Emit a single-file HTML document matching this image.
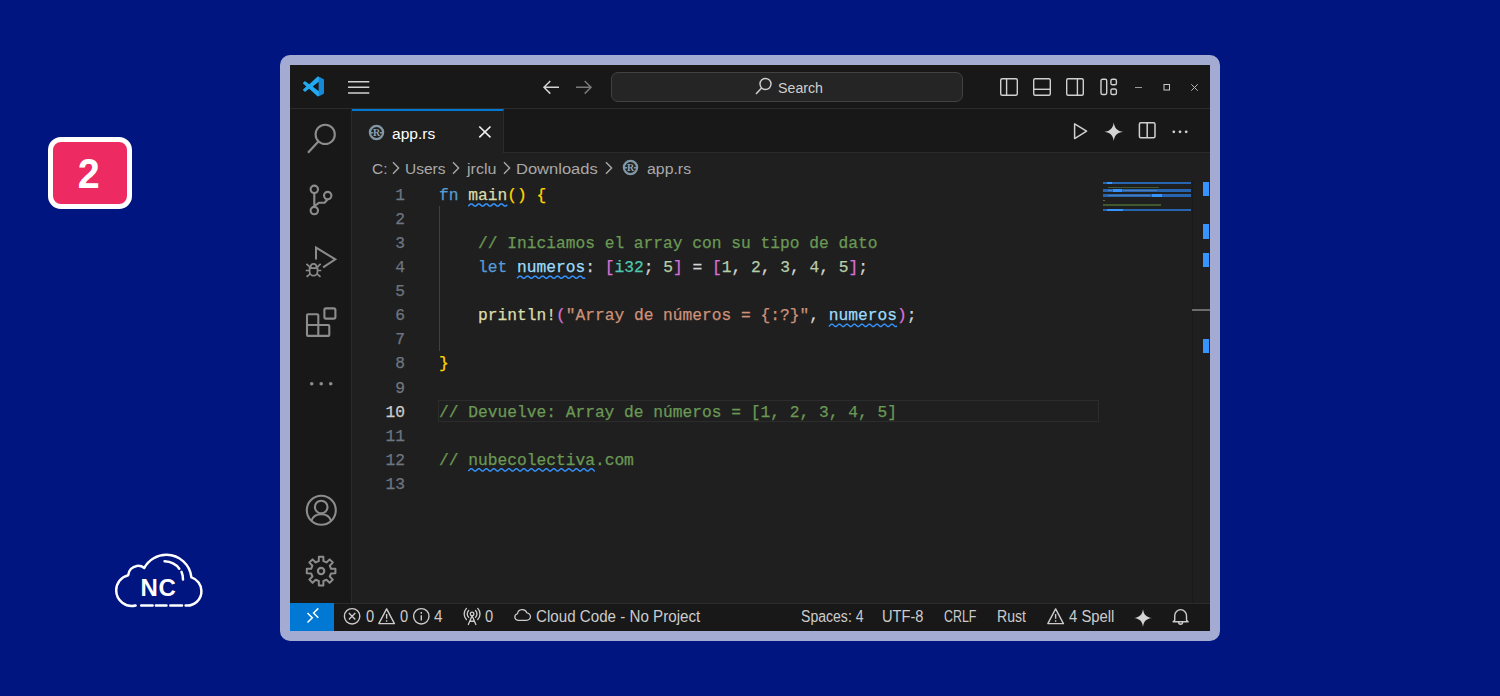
<!DOCTYPE html>
<html lang="es">
<head>
<meta charset="utf-8">
<title>app.rs</title>
<style>
*{box-sizing:border-box;margin:0;padding:0}
html,body{width:1500px;height:696px;overflow:hidden}
body{background:#00157f;position:relative;font-family:"Liberation Sans",sans-serif}
.abs{position:absolute}
#badge{left:48px;top:137px;width:84px;height:72px;border:5px solid #fff;border-radius:13px;background:#ee2a62;color:#fff;font-weight:bold;font-size:42.5px;line-height:63.500px;text-align:center;text-indent:-1px}
#frame{left:280px;top:55px;width:940px;height:586px;background:#a4abd3;border-radius:10px}
#win{left:290px;top:65px;width:920px;height:566px;background:#1f1f1f;overflow:hidden}
#title{left:0;top:0;width:920px;height:44px;background:#181818;border-bottom:1px solid #2b2b2b}
#act{left:0;top:44px;width:62px;height:494px;background:#181818;border-right:1px solid #2b2b2b}
#tabs{left:62px;top:44px;width:858px;height:44px;background:#181818;border-bottom:1px solid #2b2b2b}
#tab{left:0;top:0;width:152px;height:44px;background:#1f1f1f;border-top:2px solid #0078d4;border-right:1px solid #2b2b2b}
#status{left:0;top:538px;width:920px;height:28px;background:#181818;border-top:1px solid #2b2b2b}
#remote{left:0;top:-1px;width:44px;height:28px;background:#0078d4}
.st{top:3.4px}
.ui{color:#cccccc;font-size:15.5px;white-space:nowrap;line-height:20px}
.ui span,.ui.abs{transform-origin:0 50%}
.st{font-size:15.8px}
.code{-webkit-text-stroke:0.25px;font-family:"Liberation Mono",monospace;font-size:16.24px;line-height:24.08px;white-space:pre;color:#d4d4d4}
.ln{left:62px;width:53px;text-align:right;color:#6e7681}
.ln.cur{color:#cccccc}
.c{color:#6a9955}.k{color:#569cd6}.f{color:#dcdcaa}.y{color:#ffd700}.p{color:#da70d6}.v{color:#9cdcfe}.t{color:#4ec9b0}.n{color:#b5cea8}.s{color:#ce9178}
.sq{}
</style>
</head>
<body>
<div id="badge" class="abs"><span style="display:inline-block;transform:scaleX(0.93)">2</span></div>

<svg class="abs" style="left:105px;top:545px" width="110" height="70" viewBox="0 0 110 70">
 <g fill="none" stroke="#fff" stroke-width="2.5" stroke-linecap="round" stroke-linejoin="round">
  <path d="M30.6 60.5 A15.6 15.6 0 0 1 11.2 45.6 A15.6 15.6 0 0 1 23.2 30.2 A10 10 0 0 1 31.8 20.9 A10 10 0 0 1 39.3 22.9 A25.15 25.15 0 0 1 61.7 9.8 A25.15 25.15 0 0 1 86.4 32.4 A14.2 14.2 0 0 1 96.400 45.800 A14.2 14.2 0 0 1 80.600 60.500"/>
  <path d="M36.2 60.5H47.6 M50.9 60.5H61.5 M65.3 60.5H77"/>
  <path d="M59.6 16.3 C65.5 16.6 71 19.3 74.3 23.7"/>
  <path d="M76.5 26.8 C77.6 29.3 78 32 78 34.6"/>
 </g>
 <text x="53.4" y="51.3" font-family="Liberation Sans,sans-serif" font-weight="bold" font-size="24" fill="#fff" text-anchor="middle" letter-spacing="0.6">NC</text>
</svg>

<div id="frame" class="abs"></div>
<div id="win" class="abs">
 <div id="title" class="abs">
  <svg class="abs" style="left:12.600px;top:10.800px" width="21" height="21" viewBox="0 0 100 100">
   <path fill="#23a9f2" d="M74.9 3.5 96 13.7c2.400000 1.200000 4 3.600000 4 6.300000v60c0 2.700000-1.600000 5.100000-4 6.300000L74.900000 96.500000c-2.500000 1.200000-5.500000.700000-7.500000-1.300000L29.500000 60.500000 12 73.800000c-1.600000 1.200000-3.800000 1.100000-5.300000-.200000L1.500000 68.900000c-1.900000-1.700000-1.900000-4.600000 0-6.300000L16 50 1.500000 37.400000c-1.900000-1.700000-1.900000-4.600000 0-6.300000l5.200000-4.700000c1.500000-1.300000 3.700000-1.400000 5.300000-.200000l17.500000 13.300000L67.400000 4.800000c2-2 5-2.500000 7.500000-1.300000zM75 27.300000 46.200000 50 75 72.700000z"/>
   <path fill="#0b6fbf" d="M75 3.600000 96 13.700000c2.400000 1.200000 4 3.600000 4 6.300000v60c0 2.700000-1.600000 5.100000-4 6.300000L75 96.400000z" opacity=".55"/>
  </svg>
  <svg class="abs" style="left:58px;top:15px" width="22" height="14" viewBox="0 0 22 14"><path d="M0 1.700H21.300M0 7.300H21.300M0 13H21.300" stroke="#d0d0d0" stroke-width="1.500" fill="none"/></svg>
  <svg class="abs" style="left:252px;top:14px" width="20" height="16" viewBox="0 0 20 16"><path d="M17 8.300H2M8.300 2 2 8.300l6.300 6.300" stroke="#d4d4d4" stroke-width="1.500" fill="none" stroke-linejoin="miter"/></svg>
  <svg class="abs" style="left:284px;top:14px" width="20" height="16" viewBox="0 0 20 16"><path d="M2 8.300H17M10.700 2 17 8.300l-6.300 6.300" stroke="#7a7a7a" stroke-width="1.500" fill="none"/></svg>
  <div class="abs" style="left:321px;top:6.500px;width:352px;height:30.500px;border:1px solid #424242;border-radius:7px;background:#252525"></div>
  <svg class="abs" style="left:463.900px;top:11.200px" width="20" height="20" viewBox="0 0 20 20"><circle cx="11.500" cy="8" r="5.500" stroke="#cfcfcf" stroke-width="1.400" fill="none"/><path d="M7.800 11.800 2 18" stroke="#cfcfcf" stroke-width="1.500"/></svg>
  <div class="abs ui" id="t_search" style="left:488.48px;top:12.6px;color:#cfcfcf;transform:scaleX(0.9167)">Search</div>
  <svg class="abs" style="left:709px;top:12px" width="20" height="20" viewBox="0 0 20 20"><rect x="1.700" y="1.700" width="16.600" height="16.600" rx="1.500" stroke="#d0d0d0" stroke-width="1.400" fill="none"/><path d="M7.600 1.700v16.600" stroke="#d0d0d0" stroke-width="1.400"/></svg>
  <svg class="abs" style="left:742px;top:12px" width="20" height="20" viewBox="0 0 20 20"><rect x="1.700" y="1.700" width="16.600" height="16.600" rx="1.500" stroke="#d0d0d0" stroke-width="1.400" fill="none"/><path d="M1.700 12.300h16.600" stroke="#d0d0d0" stroke-width="1.400"/></svg>
  <svg class="abs" style="left:775px;top:12px" width="20" height="20" viewBox="0 0 20 20"><rect x="1.700" y="1.700" width="16.600" height="16.600" rx="1.500" stroke="#d0d0d0" stroke-width="1.400" fill="none"/><path d="M12.400 1.700v16.600" stroke="#d0d0d0" stroke-width="1.400"/></svg>
  <svg class="abs" style="left:809px;top:12px" width="20" height="20" viewBox="0 0 20 20"><rect x="2" y="2.300" width="5.700" height="15.200" rx="1.400" stroke="#d0d0d0" stroke-width="1.400" fill="none"/><rect x="11.900" y="2.300" width="5.500" height="5.500" rx="1.600" stroke="#d0d0d0" stroke-width="1.400" fill="none"/><rect x="11.900" y="12" width="5.500" height="5.500" rx="1.600" stroke="#d0d0d0" stroke-width="1.400" fill="none"/></svg>
  <svg class="abs" style="left:843px;top:17px" width="12" height="12" viewBox="0 0 12 12"><path d="M2 5.500h7" stroke="#9a9a9a" stroke-width="1"/></svg>
  <svg class="abs" style="left:872px;top:18px" width="10" height="10" viewBox="0 0 10 10"><rect x="2" y="1.500" width="5.500" height="5.500" stroke="#c8c8c8" stroke-width="1" fill="none"/></svg>
  <svg class="abs" style="left:899px;top:17px" width="12" height="12" viewBox="0 0 12 12"><path d="M2.300 2.300 8.700 8.700M8.700 2.300 2.300 8.700" stroke="#b8b8b8" stroke-width="1"/></svg>
 </div>
 <div id="act" class="abs">
  <svg class="abs" style="left:0;top:0" width="61" height="494" viewBox="290 109 61 494" fill="none" stroke="#8c8c8c" stroke-width="2.100">
   <circle cx="325.200" cy="134.400" r="9.600"/><path d="M318.600 141.200 308 152.800" stroke-width="2.200"/>
   <circle cx="314.300" cy="189.300" r="3.700"/><circle cx="314.300" cy="210.600" r="3.700"/><circle cx="327.700" cy="195.600" r="3.700"/>
   <path d="M314.300 193V206.900M327.700 199.300 324.600 202.700H319.200L314.600 206" stroke-linejoin="round"/>
   <path d="M316 259.500V247.600L335.300 259.300 323.100 267.300" stroke-linejoin="miter" stroke-width="2"/>
   <g stroke-width="1.700"><path d="M309.600 268.200h7.900v3.200a3.950 4.300 0 0 1-7.900 0zM310.500 268c0-5.600 6.100-5.600 6.100 0"/>
   <path d="M309.600 270.500h-3.800M317.500 270.500h3.800M310 267.200l-3.600-3.300M317.100 267.200l3.600-3.300M310.300 273.600l-3.700 3.300M316.800 273.600l3.700 3.300"/></g>
   <path d="M308 314.200H317.300a1 1 0 0 1 1 1V325H328.300a1 1 0 0 1 1 1V334.900a1 1 0 0 1-1 1H308a1 1 0 0 1-1-1V315.200a1 1 0 0 1 1-1ZM307 325H318.300V335.900"/>
   <rect x="324.400" y="308.400" width="11" height="10.200" rx="1.600"/>
   <g fill="#8c8c8c" stroke="none"><circle cx="311.700" cy="383.700" r="1.800"/><circle cx="321.200" cy="383.700" r="1.800"/><circle cx="330.700" cy="383.700" r="1.800"/></g>
   <circle cx="321.300" cy="510.300" r="14.500"/><circle cx="321.200" cy="507" r="6.300"/>
   <path d="M311.300 520.800c1.500-4.400 5.300-6.600 9.900-6.600s8.400 2.200 9.900 6.600"/>
   <path d="M323.40 581.04 L323.37 585.42 L318.83 585.42 L318.80 581.04 L315.70 579.75 L312.58 582.83 L309.37 579.62 L312.45 576.50 L311.16 573.40 L306.78 573.37 L306.78 568.83 L311.16 568.80 L312.45 565.70 L309.37 562.58 L312.58 559.37 L315.70 562.45 L318.80 561.16 L318.83 556.78 L323.37 556.78 L323.40 561.16 L326.50 562.45 L329.62 559.37 L332.83 562.58 L329.75 565.70 L331.04 568.80 L335.42 568.83 L335.42 573.37 L331.04 573.40 L329.75 576.50 L332.83 579.62 L329.62 582.83 L326.50 579.75Z" stroke-linejoin="round" stroke-width="2"/><circle cx="321.100" cy="571.100" r="3.200"/>
  </svg>
 </div>
 <div id="tabs" class="abs">
  <div id="tab" class="abs">
   <svg class="abs" style="left:16px;top:13px" width="17" height="17" viewBox="0 0 17 17"><circle cx="8.500" cy="8.500" r="6.600" fill="none" stroke="#8197a5" stroke-width="2.300"/><path d="M3 8.700H5.200M11.800 8.700H14" stroke="#8197a5" stroke-width="1.400"/><text x="8.600" y="12" font-family="Liberation Serif,serif" font-weight="bold" font-size="10" fill="#8ea4b2" text-anchor="middle">R</text></svg>
   <div class="abs ui" id="t_tab" style="left:39.90px;top:12.5px;color:#ffffff;transform:scaleX(1.0048)">app.rs</div>
   <svg class="abs" style="left:125px;top:12.800px" width="16" height="16" viewBox="0 0 16 16"><path d="M2.300 2.500 13.500 13.300M13.500 2.500 2.300 13.300" stroke="#f0f0f0" stroke-width="1.650"/></svg>
  </div>
  <svg class="abs" style="left:718px;top:12px" width="20" height="20" viewBox="0 0 20 20"><path d="M4.600 2.800V17.600L16.600 10.200Z" fill="none" stroke="#d0d0d0" stroke-width="1.500" stroke-linejoin="round"/></svg>
  <svg class="abs" style="left:750.500px;top:11.500px" width="21.500" height="21.500" viewBox="0 0 20 20"><path d="M10 1.300C10.700 6.700 13.300 9.300 18.700 10 13.300 10.700 10.700 13.300 10 18.700 9.300 13.300 6.700 10.700 1.300 10 6.700 9.300 9.300 6.700 10 1.300Z" fill="#d4d4d4"/></svg>
  <svg class="abs" style="left:785px;top:12px" width="20" height="20" viewBox="0 0 20 20"><rect x="2.400" y="1.800" width="15.600" height="15" rx="1.500" stroke="#d0d0d0" stroke-width="1.500" fill="none"/><path d="M10.200 1.800v15" stroke="#d0d0d0" stroke-width="1.500"/></svg>
  <svg class="abs" style="left:818px;top:12px" width="20" height="20" viewBox="0 0 20 20" fill="#d0d0d0"><circle cx="3.800" cy="10.800" r="1.400"/><circle cx="10" cy="10.800" r="1.400"/><circle cx="16.200" cy="10.800" r="1.400"/></svg>
 </div>
 <div id="crumbs" class="abs ui" style="left:62px;top:88px;width:760px;height:28px;color:#a9a9a9">
  <span class="abs" id="b1" style="left:20.10px;top:5.6px;transform:scaleX(0.9946)">C:</span>
  <svg class="abs" style="left:39.0px;top:7.600px" width="10" height="14" viewBox="0 0 10 14"><path d="M2 1.300 7.600 7 2 12.700" fill="none" stroke="#a9a9a9" stroke-width="1.400"/></svg>
  <span class="abs" id="b2" style="left:53.00px;top:5.6px;transform:scaleX(1.0000)">Users</span>
  <svg class="abs" style="left:99.4px;top:7.600px" width="10" height="14" viewBox="0 0 10 14"><path d="M2 1.300 7.600 7 2 12.700" fill="none" stroke="#a9a9a9" stroke-width="1.400"/></svg>
  <span class="abs" id="b3" style="left:115.03px;top:5.6px;transform:scaleX(1.0345)">jrclu</span>
  <svg class="abs" style="left:150.0px;top:7.600px" width="10" height="14" viewBox="0 0 10 14"><path d="M2 1.300 7.600 7 2 12.700" fill="none" stroke="#a9a9a9" stroke-width="1.400"/></svg>
  <span class="abs" id="b4" style="left:163.83px;top:5.6px;transform:scaleX(1.0658)">Downloads</span>
  <svg class="abs" style="left:251.7px;top:7.600px" width="10" height="14" viewBox="0 0 10 14"><path d="M2 1.300 7.600 7 2 12.700" fill="none" stroke="#a9a9a9" stroke-width="1.400"/></svg>
  <svg class="abs" style="left:270px;top:6px" width="17" height="17" viewBox="0 0 17 17"><circle cx="8.500" cy="8.500" r="6.600" fill="none" stroke="#8197a5" stroke-width="2.300"/><path d="M3 8.700H5.200M11.800 8.700H14" stroke="#8197a5" stroke-width="1.400"/><text x="8.600" y="12" font-family="Liberation Serif,serif" font-weight="bold" font-size="10" fill="#8ea4b2" text-anchor="middle">R</text></svg>
  <span class="abs" id="b5" style="left:295.10px;top:5.6px;transform:scaleX(1.0233)">app.rs</span>
 </div>
 <div id="editor">
 <svg class="abs" style="left:0;top:0" width="920" height="566" viewBox="0 0 920 566" fill="none" stroke="#3592fb" stroke-width="1.45" stroke-linejoin="round"><path d="M178.24 141.08 L180.74 138.92 L181.99 138.92 L184.49 141.08 L185.74 141.08 L188.24 138.92 L189.49 138.92 L191.99 141.08 L193.24 141.08 L195.74 138.92 L196.99 138.92 L199.49 141.08 L200.74 141.08 L203.24 138.92 L204.49 138.92 L206.99 141.08 L208.24 141.08 L210.74 138.92 L211.99 138.92 L214.49 141.08 L215.74 141.08 L217.21 139.80"/><path d="M226.96 213.32 L229.46 211.16 L230.71 211.16 L233.21 213.32 L234.46 213.32 L236.96 211.16 L238.21 211.16 L240.71 213.32 L241.96 213.32 L244.46 211.16 L245.71 211.16 L248.21 213.32 L249.46 213.32 L251.96 211.16 L253.21 211.16 L255.71 213.32 L256.96 213.32 L259.46 211.16 L260.71 211.16 L263.21 213.32 L264.46 213.32 L266.96 211.16 L268.21 211.16 L270.71 213.32 L271.96 213.32 L274.46 211.16 L275.71 211.16 L278.21 213.32 L279.46 213.32 L281.96 211.16 L283.21 211.16 L285.71 213.32 L286.96 213.32 L289.46 211.16 L290.71 211.16 L293.21 213.32 L294.46 213.32 L295.17 212.70"/><path d="M538.80 261.48 L541.30 259.32 L542.55 259.32 L545.05 261.48 L546.30 261.48 L548.80 259.32 L550.05 259.32 L552.55 261.48 L553.80 261.48 L556.30 259.32 L557.55 259.32 L560.05 261.48 L561.30 261.48 L563.80 259.32 L565.05 259.32 L567.55 261.48 L568.80 261.48 L571.30 259.32 L572.55 259.32 L575.05 261.48 L576.30 261.48 L578.80 259.32 L580.05 259.32 L582.55 261.48 L583.80 261.48 L586.30 259.32 L587.55 259.32 L590.05 261.48 L591.30 261.48 L593.80 259.32 L595.05 259.32 L597.55 261.48 L598.80 261.48 L601.30 259.32 L602.55 259.32 L605.05 261.48 L606.30 261.48 L607.01 260.86"/><path d="M178.24 405.96 L180.74 403.80 L181.99 403.80 L184.49 405.96 L185.74 405.96 L188.24 403.80 L189.49 403.80 L191.99 405.96 L193.24 405.96 L195.74 403.80 L196.99 403.80 L199.49 405.96 L200.74 405.96 L203.24 403.80 L204.49 403.80 L206.99 405.96 L208.24 405.96 L210.74 403.80 L211.99 403.80 L214.49 405.96 L215.74 405.96 L218.24 403.80 L219.49 403.80 L221.99 405.96 L223.24 405.96 L225.74 403.80 L226.99 403.80 L229.49 405.96 L230.74 405.96 L233.24 403.80 L234.49 403.80 L236.99 405.96 L238.24 405.96 L240.74 403.80 L241.99 403.80 L244.49 405.96 L245.74 405.96 L248.24 403.80 L249.49 403.80 L251.99 405.96 L253.24 405.96 L255.74 403.80 L256.99 403.80 L259.49 405.96 L260.74 405.96 L263.24 403.80 L264.49 403.80 L266.99 405.96 L268.24 405.96 L270.74 403.80 L271.99 403.80 L274.49 405.96 L275.74 405.96 L278.24 403.80 L279.49 403.80 L281.99 405.96 L283.24 405.96 L285.74 403.80 L286.99 403.80 L289.49 405.96 L290.74 405.96 L293.24 403.80 L294.49 403.80 L296.99 405.96 L298.24 405.96 L300.74 403.80 L301.99 403.80 L304.49 405.96 L304.92 405.96"/></svg>
 <div class="abs" style="left:148px;top:334.7px;width:661px;height:22.8px;border:1px solid #2c2c2c"></div>
 <div class="abs" style="left:148.500px;top:141px;width:1px;height:145px;background:#404040"></div>
 <div class="abs code ln" style="top:118.90px">1</div>
 <div class="abs code" style="left:149px;top:118.90px"><span class="k">fn</span> <span class="f sq">main</span><span class="y">()</span> <span class="y">{</span></div>
 <div class="abs code ln" style="top:142.98px">2</div>
 <div class="abs code ln" style="top:167.06px">3</div>
 <div class="abs code" style="left:149px;top:167.06px">    <span class="c">// Iniciamos el array con su tipo de dato</span></div>
 <div class="abs code ln" style="top:191.14px">4</div>
 <div class="abs code" style="left:149px;top:191.14px">    <span class="k">let</span> <span class="v sq">numeros</span>: <span class="p">[</span><span class="t">i32</span>; <span class="n">5</span><span class="p">]</span> = <span class="p">[</span><span class="n">1</span>, <span class="n">2</span>, <span class="n">3</span>, <span class="n">4</span>, <span class="n">5</span><span class="p">]</span>;</div>
 <div class="abs code ln" style="top:215.22px">5</div>
 <div class="abs code ln" style="top:239.30px">6</div>
 <div class="abs code" style="left:149px;top:239.30px">    <span class="f">println!</span><span class="p">(</span><span class="s">"Array de números = {:?}"</span>, <span class="v sq">numeros</span><span class="p">)</span>;</div>
 <div class="abs code ln" style="top:263.38px">7</div>
 <div class="abs code ln" style="top:287.46px">8</div>
 <div class="abs code" style="left:149px;top:287.46px"><span class="y">}</span></div>
 <div class="abs code ln" style="top:311.54px">9</div>
 <div class="abs code ln cur" style="top:335.62px">10</div>
 <div class="abs code" style="left:149px;top:335.62px"><span class="c">// Devuelve: Array de números = [1, 2, 3, 4, 5]</span></div>
 <div class="abs code ln" style="top:359.70px">11</div>
 <div class="abs code ln" style="top:383.78px">12</div>
 <div class="abs code" style="left:149px;top:383.78px"><span class="c">// <span class="sq">nubecolectiva</span>.com</span></div>
 <div class="abs code ln" style="top:407.86px">13</div>
 </div>
 <div id="minimap">
 <div class="abs" style="left:813.0px;top:116.9px;width:88.0px;height:2.5px;background:#2765b0"></div>
 <div class="abs" style="left:817.0px;top:116.8px;width:5.2px;height:2.4px;background:#3794ff"></div>
 <div class="abs" style="left:818.0px;top:122.3px;width:51.0px;height:1.2px;background:#41592f"></div>
 <div class="abs" style="left:813.0px;top:124.4px;width:88.0px;height:2.6px;background:#2765b0"></div>
 <div class="abs" style="left:822.6px;top:124.4px;width:9.4px;height:2.6px;background:#3794ff"></div>
 <div class="abs" style="left:818.0px;top:125.0px;width:4.0px;height:1.4px;background:#4d86cf"></div>
 <div class="abs" style="left:833.0px;top:125.0px;width:34.0px;height:1.4px;background:#4d7db8"></div>
 <div class="abs" style="left:813.0px;top:129.3px;width:88.0px;height:2.6px;background:#2765b0"></div>
 <div class="abs" style="left:862.0px;top:129.3px;width:9.6px;height:2.6px;background:#3794ff"></div>
 <div class="abs" style="left:818.0px;top:130.0px;width:42.0px;height:1.3px;background:#4d7db8"></div>
 <div class="abs" style="left:813.3px;top:134.5px;width:1.7px;height:1.5px;background:#6b6640"></div>
 <div class="abs" style="left:813.0px;top:139.4px;width:58.0px;height:1.4px;background:#41592f"></div>
 <div class="abs" style="left:813.0px;top:143.9px;width:88.0px;height:2.6px;background:#2765b0"></div>
 <div class="abs" style="left:817.0px;top:143.9px;width:16.0px;height:2.6px;background:#3794ff"></div>
 <div class="abs" style="left:902.0px;top:116.0px;width:1.0px;height:422.0px;background:#1a1a1a"></div>
 <div class="abs" style="left:913.0px;top:117.4px;width:6.1px;height:13.5px;background:#3794ff"></div>
 <div class="abs" style="left:913.0px;top:159.0px;width:6.1px;height:15.0px;background:#3794ff"></div>
 <div class="abs" style="left:913.0px;top:187.8px;width:6.1px;height:14.4px;background:#3794ff"></div>
 <div class="abs" style="left:913.0px;top:273.8px;width:6.1px;height:14.4px;background:#3794ff"></div>
 <div class="abs" style="left:902.0px;top:244.0px;width:18.0px;height:2.4px;background:#6b6b6b"></div>
 </div>
 <div id="status" class="abs"><div id="remote" class="abs">
   <svg class="abs" style="left:13.4px;top:3.300px" width="17.12" height="19.26" viewBox="0 0 16 18"><path d="M4.200 6.600 8.700 11 4.200 15.500M14.300 2.200 9.900 6.600 14.300 11" fill="none" stroke="#fff" stroke-width="1.400"/></svg></div>
  <svg class="abs" style="left:53.4px;top:3.300px" width="19.26" height="19.26" viewBox="0 0 18 18" fill="none" stroke="#cccccc" stroke-width="1.300"><circle cx="8.500" cy="8.700" r="7.200"/><path d="M5.500 5.700 11.500 11.700M11.500 5.700 5.500 11.700"/></svg>
  <span class="abs ui st" id="s1" style="left:75.5px;transform:scaleX(0.93)">0</span>
  <svg class="abs" style="left:87.4px;top:3.300px" width="19.26" height="19.26" viewBox="0 0 18 18" fill="none" stroke="#cccccc" stroke-width="1.300" stroke-linejoin="round"><path d="M9 1.800 16.300 15.500H1.700Z"/><path d="M9 6.500V11M9 12.300V13.800"/></svg>
  <span class="abs ui st" id="s2" style="left:110.2px;transform:scaleX(0.93)">0</span>
  <svg class="abs" style="left:121.9px;top:3.300px" width="19.26" height="19.26" viewBox="0 0 18 18" fill="none" stroke="#cccccc" stroke-width="1.300"><circle cx="8.700" cy="8.700" r="7.200"/><path d="M8.700 7.800V12.700M8.700 4.700V6.300"/></svg>
  <span class="abs ui st" id="s3" style="left:143.6px;transform:scaleX(0.97)">4</span>
  <svg class="abs" style="left:173.4px;top:3.300px" width="19.26" height="19.26" viewBox="0 0 18 18" fill="none" stroke="#cccccc" stroke-width="1.250" stroke-linecap="round"><circle cx="8.500" cy="6.500" r="1.700"/><path d="M8.500 8.200 5 16.300M8.500 8.200 12 16.300M6.300 13.300H10.700M5.300 3.300a4.500 4.500 0 0 0 0 6.400M11.700 3.300a4.500 4.500 0 0 1 0 6.400M3.200 1.300a7.500 7.500 0 0 0 0 10.400M13.800 1.300a7.500 7.500 0 0 1 0 10.400"/></svg>
  <span class="abs ui st" id="s4" style="left:194.5px;transform:scaleX(0.93)">0</span>
  <svg class="abs" style="left:222.800px;top:3.300px" width="19.2" height="16.800" preserveAspectRatio="none" viewBox="0 0 20 18" fill="none" stroke="#cccccc" stroke-width="1.300" stroke-linejoin="round"><path d="M5.300 14.300A3.600 3.600 0 0 1 4.700 7.200 5 5 0 0 1 14.400 6.300 4 4 0 0 1 14 14.300Z"/></svg>
  <span class="abs ui st" id="s5" style="left:245.81px;transform:scaleX(0.9591)">Cloud Code - No Project</span>
  <span class="abs ui st" id="s6" style="left:511.00px;transform:scaleX(0.8899)">Spaces: 4</span>
  <span class="abs ui st" id="s7" style="left:592.03px;transform:scaleX(0.9254)">UTF-8</span>
  <span class="abs ui st" id="s8" style="left:654.30px;transform:scaleX(0.7855)">CRLF</span>
  <span class="abs ui st" id="s9" style="left:707.41px;transform:scaleX(0.8909)">Rust</span>
  <svg class="abs" style="left:756.4px;top:3.300px" width="19.26" height="19.26" viewBox="0 0 18 18" fill="none" stroke="#cccccc" stroke-width="1.300" stroke-linejoin="round"><path d="M9 1.800 16.300 15.500H1.700Z"/><path d="M9 6.500V11M9 12.300V13.800"/></svg>
  <span class="abs ui st" id="s10" style="left:778.70px;transform:scaleX(0.9397)">4 Spell</span>
  <svg class="abs" style="left:843px;top:4px" width="20" height="20" viewBox="0 0 20 20"><path d="M10 1C10.700 6.700 13.300 9.300 19 10 13.300 10.700 10.700 13.300 10 19 9.300 13.300 6.700 10.700 1 10 6.700 9.300 9.300 6.700 10 1Z" fill="#d4d4d4"/></svg>
  <svg class="abs" style="left:881.4px;top:3.300px" width="19.26" height="19.26" viewBox="0 0 18 18" fill="none" stroke="#cccccc" stroke-width="1.300" stroke-linejoin="round"><path d="M3.500 12.300V8A5.500 5.500 0 0 1 14.500 8V12.300L16 13.800H2ZM7.200 14.300a1.800 1.800 0 0 0 3.600 0"/></svg>
 </div>
</div>
</body>
</html>
